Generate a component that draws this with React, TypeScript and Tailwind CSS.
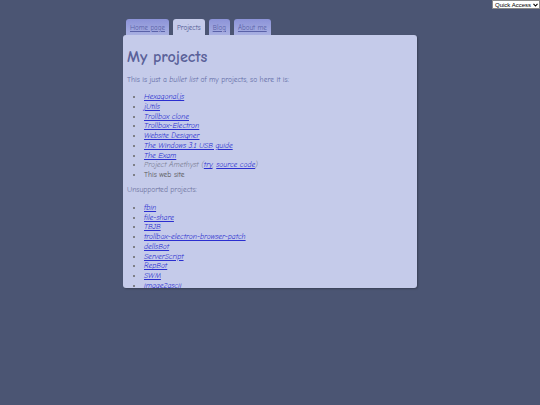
const font = { fontFamily: '"Comic Sans MS", "Comic Neue", "Liberation Sans", sans-serif' };

const tabs = [
  { label: "Home page", active: false },
  { label: "Projects", active: true },
  { label: "Blog", active: false },
  { label: "About me", active: false },
];

const supported = [
  "Hexagonal.js",
  "jUtils",
  "Trollbox clone",
  "Trollbox-Electron",
  "Website Designer",
  "The Windows 3.1 USB guide",
  "The Exam",
];

const unsupported = [
  "fbin",
  "file-share",
  "TBJB",
  "trollbox-electron-browser-patch",
  "dellsBot",
  "ServerScript",
  "RepBot",
  "SWM",
  "image2ascii",
];

const A = ({ children }: { children: React.ReactNode }) => (
  <a href="#" className="italic underline text-[#2b2fd0]">
    {children}
  </a>
);

export default function App() {
  return (
    <div className="relative min-h-[405px] w-[540px] bg-[#4b5573]" style={font}>
      <div
        className="absolute right-0 top-0 flex h-[9px] items-center gap-[2px] whitespace-nowrap border border-[#8a8a8a] bg-white pl-[2px] pr-[1px] text-[6px] leading-none text-black"
        style={{ fontFamily: '"Liberation Sans", sans-serif' }}
      >
        <span>Quick Access</span>
        <svg width="5" height="4" viewBox="0 0 5 4">
          <path d="M0.5 0.8 L2.5 3 L4.5 0.8" fill="none" stroke="#000" strokeWidth="1.1" />
        </svg>
      </div>

      <div className="ml-[123px] w-[294px] pt-[19px]">
        <nav className="flex gap-[4px] pl-[3px]">
          {tabs.map((t) => (
            <a
              key={t.label}
              href="#"
              className={
                t.active
                  ? "flex h-[16px] items-center rounded-t-[3px] bg-[#c5cbea] px-[4px] pt-[2px] text-[7px] text-[#4d5590]"
                  : "flex h-[16px] items-center rounded-t-[3px] bg-gradient-to-b from-[#8c93d8] to-[#a9b0e2] px-[4px] pt-[2px] text-[7px] text-[#5a62a8] underline"
              }
            >
              {t.label}
            </a>
          ))}
        </nav>

        <main className="h-[253px] overflow-hidden rounded-[3px] bg-[#c5cbea] px-[4px] shadow-[1px_1px_2px_rgba(0,0,0,0.25)] text-[#636ba6]">
          <h1 className="pt-[9px] text-[16px] font-bold leading-[26px] text-[#5a6199]">My projects</h1>
          <p className="mt-[5px] text-[7.5px] leading-[10px]">
            This is just a <i>bullet list</i> of my projects, so here it is:
          </p>

          <ul className="mt-[7px] list-disc pl-[17px] text-[7.5px] leading-[9.75px] marker:text-[#666]">
            {supported.map((s) => (
              <li key={s}>
                <A>{s}</A>
              </li>
            ))}
            <li className="italic text-[#7c7f95]">
              Project Amethyst (<A>try</A>, <A>source code</A>)
            </li>
            <li className="text-[#555]">This web site</li>
          </ul>

          <p className="mt-[5px] text-[7.5px] leading-[10px] text-[#6e73a0]">Unsupported projects:</p>

          <ul className="mt-[8px] list-disc pl-[17px] text-[7.5px] leading-[9.75px] marker:text-[#666]">
            {unsupported.map((s) => (
              <li key={s}>
                <A>{s}</A>
              </li>
            ))}
          </ul>
        </main>
      </div>
    </div>
  );
}
